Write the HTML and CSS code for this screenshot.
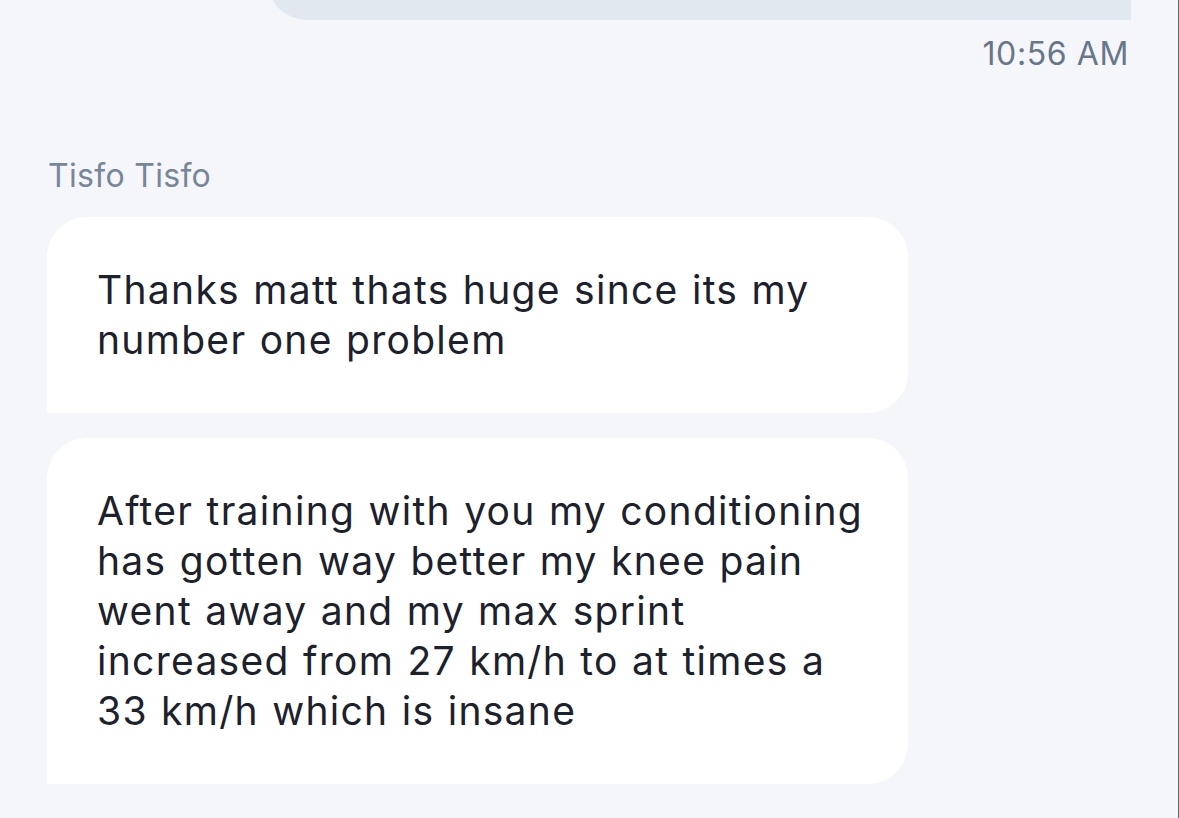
FILE: index.html
```html
<!DOCTYPE html>
<html lang="en">
<head>
<meta charset="utf-8">
<title>Chat</title>
<link rel="stylesheet" href="styles.css">
</head>
<body>
<div class="chat">
  <div class="msg-out">
    <div class="bubble-out"></div>
    <div class="time">10:56 AM</div>
  </div>
  <div class="msg-in">
    <div class="sender">Tisfo Tisfo</div>
    <div class="bubble-in">Thanks matt thats huge since its my number one problem</div>
    <div class="bubble-in">After training with you my conditioning has gotten way better my knee pain went away and my max sprint increased from 27 km/h to at times a 33 km/h which is insane</div>
  </div>
</div>
</body>
</html>
```

FILE: styles.css
```css
html, body {
  margin: 0;
  padding: 0;
  background: #f5f6fa;
}
body {
  font-family: Inter, "Noto Sans", "Liberation Sans", sans-serif;
  color: #1c212c;
}
.chat {
  width: 1179px;
  height: 818px;
  box-sizing: border-box;
  border-right: 1px solid #5f6166;
  padding: 0 47px 0 47px;
  overflow: hidden;
  display: flex;
  flex-direction: column;
}
.msg-out {
  display: flex;
  flex-direction: column;
  align-items: flex-end;
}
.bubble-out {
  width: 864px;
  height: 60px;
  margin-top: -40px;
  background: #e2e8f0;
  border-radius: 0 0 0 40px;
}
.time {
  margin-top: 16px;
  margin-right: 2px;
  font-size: 32px;
  line-height: 36px;
  letter-spacing: 0.6px;
  color: #67768a;
}
.msg-in {
  display: flex;
  flex-direction: column;
  align-items: flex-start;
  gap: 25px;
  margin-top: 86px;
}
.sender {
  margin-left: 1px;
  margin-bottom: -2px;
  font-size: 32px;
  line-height: 36px;
  letter-spacing: 0.3px;
  color: #78869a;
}
.bubble-in {
  width: 861px;
  box-sizing: border-box;
  padding: 48px 36px 48px 50px;
  background: #ffffff;
  border-radius: 40px 40px 40px 0;
  font-size: 39px;
  line-height: 50px;
  letter-spacing: 1.3px;
  word-spacing: 1px;
}
```
